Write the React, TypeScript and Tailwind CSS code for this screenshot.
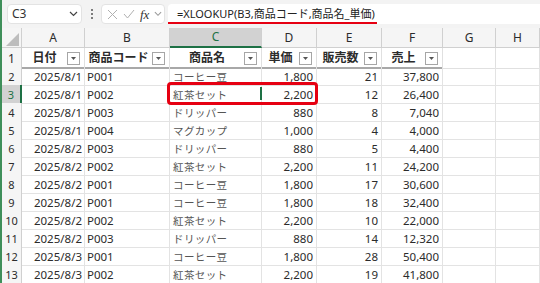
import React from 'react';

const cols = ['A', 'B', 'C', 'D', 'E', 'F', 'G', 'H'];
const heads = ['日付', '商品コード', '商品名', '単価', '販売数', '売上'];

const rows = [
  ['2025/8/1', 'P001', 'コーヒー豆', '1,800', '21', '37,800'],
  ['2025/8/1', 'P002', '紅茶セット', '2,200', '12', '26,400'],
  ['2025/8/1', 'P003', 'ドリッパー', '880', '8', '7,040'],
  ['2025/8/1', 'P004', 'マグカップ', '1,000', '4', '4,000'],
  ['2025/8/2', 'P003', 'ドリッパー', '880', '5', '4,400'],
  ['2025/8/2', 'P002', '紅茶セット', '2,200', '11', '24,200'],
  ['2025/8/2', 'P001', 'コーヒー豆', '1,800', '17', '30,600'],
  ['2025/8/2', 'P001', 'コーヒー豆', '1,800', '18', '32,400'],
  ['2025/8/2', 'P002', '紅茶セット', '2,200', '10', '22,000'],
  ['2025/8/2', 'P003', 'ドリッパー', '880', '14', '12,320'],
  ['2025/8/3', 'P001', 'コーヒー豆', '1,800', '28', '50,400'],
  ['2025/8/3', 'P002', '紅茶セット', '2,200', '19', '41,800'],
];

const grid = 'grid grid-cols-[20px_63px_85px_92px_55px_65px_61px_53px_1fr]';

const Chevron = ({ className }: { className?: string }) => (
  <svg className={className} width="9" height="6" viewBox="0 0 9 6" fill="none" stroke="currentColor" strokeWidth="1.2">
    <path d="M1 1l3.5 3.5L8 1" />
  </svg>
);

const FilterBtn = () => (
  <div className="w-[13px] h-[13px] border border-[#a6a6a6] bg-white flex items-center justify-center shrink-0">
    <svg width="5" height="3" viewBox="0 0 5 3">
      <path d="M0 0h5L2.5 3z" fill="#555" />
    </svg>
  </div>
);

const App = () => {
  return (
    <div className="w-[540px] h-[283px] overflow-hidden bg-white border-l-2 border-[#3f8f5a] font-['Noto_Sans','Noto_Sans_CJK_JP',sans-serif] text-[#2b2b2b]">
      {/* formula bar */}
      <div className="h-[28px] bg-[#f3f3f3] flex items-center pl-[5px] gap-[3px]">
        <div className="w-[75px] h-[20px] bg-white rounded-[4px] border border-[#e3e3e3] flex items-center justify-between pl-[4px] pr-[3px] text-[12px] text-[#333]">
          <span>C3</span>
          <Chevron className="text-[#444]" />
        </div>
        <div className="w-[13px] flex flex-col items-center gap-[2px]">
          <span className="w-[2px] h-[2px] bg-[#555] rounded-full" />
          <span className="w-[2px] h-[2px] bg-[#555] rounded-full" />
          <span className="w-[2px] h-[2px] bg-[#555] rounded-full" />
        </div>
        <div className="w-[64px] h-[20px] bg-white rounded-[4px] border border-[#e3e3e3] flex items-center pl-[5px] gap-[5px] text-[#b0b0b0]">
          <svg width="11" height="11" viewBox="0 0 11 11" stroke="currentColor" strokeWidth="1">
            <path d="M1 1l9 9M10 1l-9 9" />
          </svg>
          <svg width="12" height="10" viewBox="0 0 12 10" fill="none" stroke="currentColor" strokeWidth="1">
            <path d="M1 5l3.5 4L11 1" />
          </svg>
          <span className="font-['Liberation_Serif',serif] italic text-[13px] text-[#333] leading-none">fx</span>
          <Chevron className="text-[#999] w-[8px]" />
        </div>
        <div className="flex-1 h-[20px] bg-white rounded-l-[4px] flex items-center">
          <span className="text-[11px] text-[#222] border-b-2 border-[#e60012] leading-[16px] pl-[9px] pr-[2px] pt-[2px]">
            =XLOOKUP(B3,商品コード,商品名_単価)
          </span>
        </div>
      </div>

      {/* column headers */}
      <div className={`${grid} h-[20px] bg-[#f5f5f5] border-b border-[#d0d0d0] text-[12px]`}>
        <div className="border-r border-[#d0d0d0] flex items-end justify-end p-[2px]">
          <svg width="13" height="13" viewBox="0 0 13 13">
            <path d="M13 0v13H0z" fill="#bdbdbd" />
          </svg>
        </div>
        {cols.map((c) => (
          <div
            key={c}
            className={
              c === 'C'
                ? 'bg-[#d2d2d2] text-[#1e7145] border-b-2 border-[#1e7145] border-r border-r-[#d0d0d0] flex items-center justify-center'
                : 'border-r border-[#d0d0d0] flex items-center justify-center'
            }
          >
            {c}
          </div>
        ))}
      </div>

      {/* header row 1 */}
      <div className={`${grid} h-[19px] text-[12px]`}>
        <div className="bg-[#f5f5f5] border-r border-b border-[#d0d0d0] flex items-center justify-center pt-[1px]">1</div>
        {heads.map((h) => (
          <div key={h} className="border-r border-[#e0e0e0] border-b-2 border-b-[#a8a8a8] flex items-center pr-[4px] pt-[1px]">
            <span className="flex-1 text-center font-bold">{h}</span>
            <FilterBtn />
          </div>
        ))}
        <div className="border-r border-b border-[#e0e0e0]" />
        <div className="border-r border-b border-[#e0e0e0]" />
        <div className="border-b border-[#e0e0e0]" />
      </div>

      {/* data rows */}
      {rows.map((r, i) => {
        const n = i + 2;
        const sel = n === 3;
        return (
          <div key={n} className={`${grid} h-[18px] text-[11.5px] leading-[16px]`}>
            <div
              className={
                sel
                  ? 'bg-[#d2d2d2] text-[#1e7145] border-r-2 border-[#1e7145] border-b border-b-[#d0d0d0] flex items-center justify-center text-[11px] pt-[2px]'
                  : 'bg-[#f5f5f5] border-r border-b border-[#d0d0d0] flex items-center justify-center text-[11px] pt-[2px]'
              }
            >
              {n}
            </div>
            <div className="border-r border-b border-[#e3e3e3] flex items-center justify-end pr-[2px] pt-[2px]">{r[0]}</div>
            <div className="border-r border-b border-[#e3e3e3] flex items-center pl-[2px] pt-[2px]">{r[1]}</div>
            <div className="relative border-r border-b border-[#e3e3e3] flex items-center pl-[3px] pt-[2px] text-[#555] text-[10.5px] tracking-[0.4px]">
              {r[2]}
              {sel && (
                <>
                  <div className="absolute right-[-1px] top-[2px] h-[13px] w-[2px] bg-[#1e7145]" />
                  <div className="absolute left-[-3px] top-[-3px] w-[151px] h-[23px] border-[3px] border-[#e60012] rounded-[4px] z-10" />
                </>
              )}
            </div>
            <div className="border-r border-b border-[#e3e3e3] flex items-center justify-end pr-[3px] pt-[2px]">{r[3]}</div>
            <div className="border-r border-b border-[#e3e3e3] flex items-center justify-end pr-[3px] pt-[2px]">{r[4]}</div>
            <div className="border-r border-b border-[#e3e3e3] flex items-center justify-end pr-[3px] pt-[2px]">{r[5]}</div>
            <div className="border-r border-b border-[#e3e3e3]" />
            <div className="border-r border-b border-[#e3e3e3]" />
            <div className="border-b border-[#e3e3e3]" />
          </div>
        );
      })}
    </div>
  );
};

export default App;
